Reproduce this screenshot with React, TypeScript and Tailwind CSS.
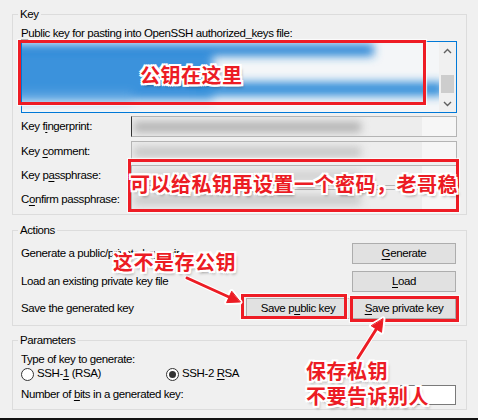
import React from "react";

const note =
  "absolute whitespace-nowrap font-['Noto_Sans_CJK_SC',sans-serif] font-bold text-[20px] leading-[20px] tracking-[0.5px] text-[#ec1c24] [text-shadow:-2px_0_0_#fff,2px_0_0_#fff,0_-2px_0_#fff,0_2px_0_#fff,-2px_-2px_0_#fff,2px_2px_0_#fff,-2px_2px_0_#fff,2px_-2px_0_#fff,2px_3px_3px_rgba(0,0,0,0.35)]";

const redBox = "absolute border-[3px] border-[#ee1c25] shadow-[0_0_1px_1px_rgba(255,255,255,0.7)]";

function U({ children }: { children: React.ReactNode }) {
  return <span className="underline decoration-1 underline-offset-[2px]">{children}</span>;
}

function Group({ title, className, children }: { title: string; className: string; children: React.ReactNode }) {
  return (
    <fieldset className={`w-[455px] border border-[#dcdcdc] pl-[8px] ${className}`}>
      <legend className="-ml-[3px] px-[2px] leading-[15px]">{title}</legend>
      {children}
    </fieldset>
  );
}

function Button({ children }: { children: React.ReactNode }) {
  return (
    <div className="flex h-[21px] w-[104px] items-center justify-center border border-[#adadad] bg-[#e1e1e1]">
      {children}
    </div>
  );
}

// blurred-out field contents
function Field({ tone, edge }: { tone: string; edge?: boolean }) {
  return (
    <div
      className={`flex h-[21px] flex-1 items-center overflow-hidden border border-[#b4b4b4] bg-[#ededed] ${
        edge ? "border-l-[#333]" : ""
      }`}
    >
      <div className={`ml-[2px] h-[10px] w-[70%] blur-[4px] ${tone}`} />
      <div className="ml-auto h-full w-[34px] bg-[#f6f6f6]" />
    </div>
  );
}

function Chevron({ up }: { up?: boolean }) {
  return (
    <svg width="9" height="6" viewBox="0 0 9 6">
      <path d={up ? "M1 5 L4.5 1.5 L8 5" : "M1 1 L4.5 4.5 L8 1"} fill="none" stroke="#606060" strokeWidth="1.4" />
    </svg>
  );
}

function Radio({ checked }: { checked?: boolean }) {
  return (
    <span className="flex h-[13px] w-[13px] items-center justify-center rounded-full border border-[#333] bg-white">
      {checked && <span className="h-[7px] w-[7px] rounded-full bg-[#333]" />}
    </span>
  );
}

export default function App() {
  return (
    <div className="relative flex h-[420px] w-[478px] flex-col overflow-hidden bg-[#f0f0f0] pl-[12px] font-['Liberation_Sans',Arial,sans-serif] text-[11.5px] tracking-[-0.4px] text-black">
      {/* Key */}
      <Group title="Key" className="mt-[7px] pr-[9px] pb-[4px]">
        <div className="h-[19px] pt-[4px] leading-[15px]">
          <U>P</U>ublic key for pasting into OpenSSH authorized_keys file:
        </div>
        <div className="flex h-[72px] border border-[#0078d7] bg-white">
          <div className="flex-1 overflow-hidden">
            <svg width="100%" height="70" viewBox="0 0 415 70" preserveAspectRatio="none">
              <defs>
                <filter id="b" x="-20%" y="-50%" width="140%" height="200%">
                  <feGaussianBlur stdDeviation="5" />
                </filter>
              </defs>
              <rect width="415" height="70" fill="#f4f6f8" />
              <g filter="url(#b)">
                <rect x="-10" y="2" width="360" height="12" fill="#2a86d6" />
                <rect x="-10" y="10" width="200" height="48" fill="#3a92dc" />
                <rect x="170" y="40" width="250" height="14" fill="#3590da" />
                <rect x="-10" y="50" width="120" height="10" fill="#5aa4e2" />
              </g>
            </svg>
          </div>
          <div className="flex w-[17px] flex-col bg-[#f0f0f0]">
            <div className="flex h-[17px] items-center justify-center">
              <Chevron up />
            </div>
            <div className="flex flex-1 justify-center pt-[16px]">
              <div className="h-[18px] w-[13px] bg-[#cdcdcd]" />
            </div>
            <div className="flex h-[17px] items-center justify-center">
              <Chevron />
            </div>
          </div>
        </div>
        <div className="mt-[3px] flex h-[21px] items-center">
          <div className="w-[110px]">Key f<U>i</U>ngerprint:</div>
          <Field tone="bg-[#b0b0b0]" edge />
        </div>
        <div className="mt-[4px] flex h-[21px] items-center">
          <div className="w-[110px]">Key <U>c</U>omment:</div>
          <Field tone="bg-[#c4c4c4]" />
        </div>
        <div className="mt-[3px] flex h-[21px] items-center">
          <div className="w-[110px]">Key p<U>a</U>ssphrase:</div>
          <Field tone="bg-[#d0d0d0]" />
        </div>
        <div className="mt-[3px] flex h-[21px] items-center">
          <div className="w-[110px]">C<U>o</U>nfirm passphrase:</div>
          <Field tone="bg-[#c8c8c8]" />
        </div>
      </Group>

      {/* Actions */}
      <Group title="Actions" className="mt-[8px] pr-[10px] pb-[6px]">
        <div className="mt-[5px] flex h-[21px] items-center justify-between">
          <span>Generate a public/private key pair</span>
          <Button>
            <U>G</U>enerate
          </Button>
        </div>
        <div className="mt-[7px] flex h-[21px] items-center justify-between">
          <span>Load an existing private key file</span>
          <Button>
            <U>L</U>oad
          </Button>
        </div>
        <div className="mt-[6px] flex h-[21px] items-center">
          <span className="flex-1">Save the generated key</span>
          <Button>
            Save p<U>u</U>blic key
          </Button>
          <div className="w-[2px]" />
          <Button>
            <U>S</U>ave private key
          </Button>
        </div>
      </Group>

      {/* Parameters */}
      <Group title="Parameters" className="mt-[7px] pr-[10px] pb-[4px]">
        <div className="mt-[4px] h-[15px] leading-[15px]">Type of key to generate:</div>
        <div className="flex h-[14px] items-center">
          <div className="flex w-[145px] items-center gap-[3px]">
            <Radio />
            <span>
              SSH-<U>1</U> (RSA)
            </span>
          </div>
          <div className="flex items-center gap-[3px]">
            <Radio checked />
            <span>
              SSH-2 <U>R</U>SA
            </span>
          </div>
        </div>
        <div className="mt-[4px] flex h-[20px] items-center justify-between">
          <span>
            Number of <U>b</U>its in a generated key:
          </span>
          <div className="h-[20px] w-[56px] border border-[#7a7a7a] bg-white" />
        </div>
      </Group>

      <div className="-ml-[12px] mt-auto h-[2px] bg-[#111]" />

      {/* annotations */}
      <div className={`${redBox} left-[18px] top-[40px] h-[65px] w-[408px]`} />
      <div className={`${redBox} left-[128px] top-[159px] h-[53px] w-[331px]`} />
      <div className={`${redBox} left-[241px] top-[294px] h-[25px] w-[106px]`} />
      <div className={`${redBox} left-[350px] top-[296px] h-[26px] w-[109px]`} />

      <svg className="pointer-events-none absolute left-0 top-0" width="478" height="420">
        <g stroke="#fff" strokeWidth="5" strokeLinecap="round" fill="#fff" strokeLinejoin="round">
          <line x1="187" y1="278" x2="230" y2="297.5" />
          <polygon points="240,302 226.6,302.6 231.6,291.6" />
          <line x1="358" y1="358" x2="377" y2="328" />
          <polygon points="383,319 381.5,332.3 371.5,325.9" />
        </g>
        <g stroke="#ec1c24" strokeWidth="3" strokeLinecap="round" fill="#ec1c24" strokeLinejoin="round">
          <line x1="187" y1="278" x2="230" y2="297.5" />
          <polygon points="240,302 226.6,302.6 231.6,291.6" strokeWidth="1" />
          <line x1="358" y1="358" x2="377" y2="328" />
          <polygon points="383,319 381.5,332.3 371.5,325.9" strokeWidth="1" />
        </g>
      </svg>

      <div className={`${note} left-[140px] top-[65px]`}>公钥在这里</div>
      <div className={`${note} left-[130px] top-[174px]`}>可以给私钥再设置一个密码，老哥稳</div>
      <div className={`${note} left-[113px] top-[252px]`}>这不是存公钥</div>
      <div className={`${note} left-[306px] top-[361px]`}>保存私钥</div>
      <div className={`${note} left-[306px] top-[386px]`}>不要告诉别人</div>
    </div>
  );
}
